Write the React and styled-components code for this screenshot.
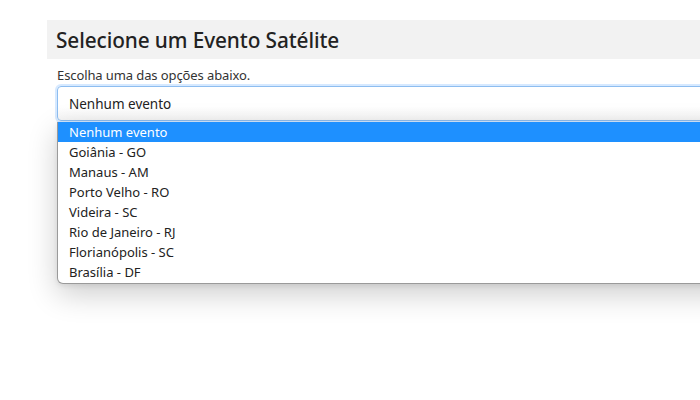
import React from "react";
import styled, { createGlobalStyle } from "styled-components";

const Global = createGlobalStyle`
  html, body { margin: 0; padding: 0; background: #fff; overflow: hidden; }
  body { font-family: "Noto Sans", "Open Sans", sans-serif; color: #212529; }
`;

const Page = styled.div`
  width: 760px;
  height: 400px;
  padding: 20px 0 0 47px;
  box-sizing: border-box;
`;

const Header = styled.div`
  background: #f2f2f2;
  height: 39px;
  display: flex;
  align-items: center;
  padding-left: 9px;
  font-size: 20.8px;
  font-weight: 500;
  color: #222;
  letter-spacing: -0.1px;
`;

const Body = styled.div`
  padding: 7px 0 0 10px;
  position: relative;
`;

const Label = styled.div`
  font-size: 13px;
  line-height: 18px;
  color: #333;
  margin-bottom: 2px;
  letter-spacing: -0.1px;
`;

const Select = styled.div`
  height: 35px;
  box-sizing: border-box;
  border: 1px solid #8dbdf0;
  border-radius: 4px;
  box-shadow: 0 0 0 2px rgba(0, 120, 255, 0.16);
  background: linear-gradient(#fff 60%, #f5f5f5);
  display: flex;
  align-items: center;
  padding-left: 11px;
  font-size: 13.5px;
  color: #222;
`;

const Dropdown = styled.ul`
  position: absolute;
  top: 63px;
  left: 10px;
  right: 0;
  margin: 0;
  padding: 0 0 1px;
  list-style: none;
  background: #fff;
  border: 1px solid #9a9a9a;
  border-top: none;
  border-radius: 0 0 6px 6px;
  box-shadow: 0 10px 30px rgba(0, 0, 0, 0.2), 0 2px 5px rgba(0, 0, 0, 0.08);
`;

const Option = styled.li`
  height: 20px;
  line-height: 20px;
  padding-left: 11px;
  font-size: 13px;
  color: ${(p) => (p.$active ? "#fff" : "#222")};
  background: ${(p) => (p.$active ? "#1e90ff" : "transparent")};
`;

const options = [
  "Nenhum evento",
  "Goiânia - GO",
  "Manaus - AM",
  "Porto Velho - RO",
  "Videira - SC",
  "Rio de Janeiro - RJ",
  "Florianópolis - SC",
  "Brasília - DF",
];

export default function App() {
  return (
    <>
      <Global />
      <Page>
        <Header>Selecione um Evento Satélite</Header>
        <Body>
          <Label>Escolha uma das opções abaixo.</Label>
          <Select>Nenhum evento</Select>
          <Dropdown>
            {options.map((o, i) => (
              <Option key={o} $active={i === 0}>
                {o}
              </Option>
            ))}
          </Dropdown>
        </Body>
      </Page>
    </>
  );
}
